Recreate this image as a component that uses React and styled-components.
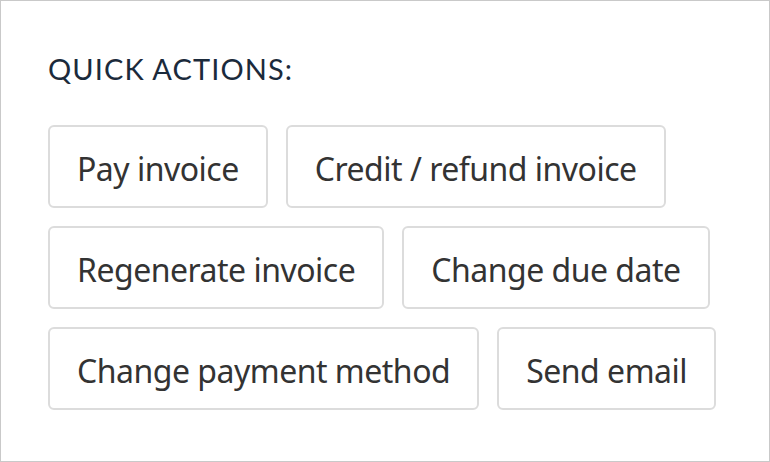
import React from "react";
import styled, { createGlobalStyle } from "styled-components";

const GlobalStyle = createGlobalStyle`
  html, body {
    margin: 0;
    padding: 0;
    background: #ffffff;
  }
  * {
    box-sizing: border-box;
  }
`;

const Panel = styled.div`
  width: 770px;
  height: 462px;
  border: 1px solid #c9c9c9;
  background: #ffffff;
  padding: 48px 47px;
`;

const Heading = styled.h3`
  margin: 0 0 36px 0;
  font-family: "Lato", "Open Sans", sans-serif;
  font-size: 29px;
  font-weight: 400;
  letter-spacing: 1.1px;
  color: #1b2a3b;
  line-height: 40px;
`;

const Actions = styled.div`
  display: flex;
  flex-wrap: wrap;
  gap: 18px;
  max-width: 680px;
`;

const ActionButton = styled.button`
  font-family: "Noto Sans", "Open Sans", sans-serif;
  font-size: 32px;
  font-weight: 400;
  letter-spacing: -0.5px;
  color: #333333;
  background: #ffffff;
  border: 2px solid #dcdcdc;
  border-radius: 6px;
  height: 83px;
  padding: 4px 27px 0;
  line-height: 1;
  cursor: pointer;
`;

const actions = [
  "Pay invoice",
  "Credit / refund invoice",
  "Regenerate invoice",
  "Change due date",
  "Change payment method",
  "Send email",
];

const App = () => (
  <>
    <GlobalStyle />
    <Panel>
      <Heading>QUICK ACTIONS:</Heading>
      <Actions>
        {actions.map((label) => (
          <ActionButton key={label} type="button">{label}</ActionButton>
        ))}
      </Actions>
    </Panel>
  </>
);

export default App;
